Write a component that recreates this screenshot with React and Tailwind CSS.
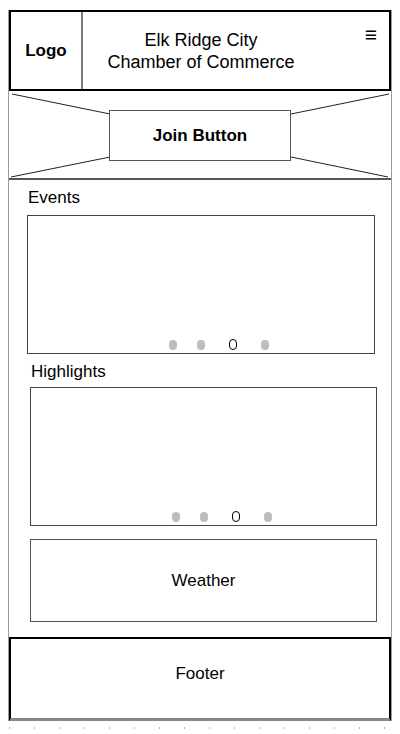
import React from 'react';

const Dots = ({ offset }) => (
  <div className={`flex items-center gap-[20px] pb-[3px] ${offset}`}>
    <span className="w-[8px] h-[10px] rounded-full bg-[#bdbdbd]" />
    <span className="w-[8px] h-[10px] rounded-full bg-[#bdbdbd]" />
    <span className="ml-[4px] w-[8px] h-[11px] rounded-full border border-black" />
    <span className="ml-[4px] w-[8px] h-[10px] rounded-full bg-[#bdbdbd]" />
  </div>
);

const App = () => {
  const ticks = Array.from({ length: 16 });

  return (
    <div className="w-[400px] h-[734px] bg-white text-black font-['Liberation_Sans',Arial,sans-serif] pt-[10px]">
      <div className="mx-[8px] border-l border-r border-[#9a9a9a]">
        {/* header */}
        <div className="h-[81px] flex border-2 border-black">
          <div className="w-[72px] flex items-center justify-center border-r-2 border-[#7a7a7a]">
            <span className="text-[17px] font-bold">Logo</span>
          </div>
          <div className="flex-1 relative flex items-center justify-center">
            <div className="text-center text-[18px] leading-[22px] pr-[70px]">
              <div>Elk Ridge City</div>
              <div>Chamber of Commerce</div>
            </div>
            <span className="absolute right-[12px] top-[12px] text-[21px] leading-none">≡</span>
          </div>
        </div>

        {/* hero */}
        <div className="relative h-[89px] flex items-center justify-center border-b-2 border-[#555]">
          <svg className="absolute inset-0" width="382" height="89" viewBox="0 0 382 89">
            <line x1="3" y1="3" x2="101" y2="23" stroke="#222" strokeWidth="1" />
            <line x1="2" y1="86" x2="101" y2="66" stroke="#222" strokeWidth="1" />
            <line x1="380" y1="3" x2="282" y2="23" stroke="#222" strokeWidth="1" />
            <line x1="379" y1="86" x2="282" y2="66" stroke="#222" strokeWidth="1" />
          </svg>
          <div className="relative w-[182px] h-[51px] mt-[2px] bg-white border border-[#555] flex items-center justify-center">
            <span className="text-[17px] font-bold">Join Button</span>
          </div>
        </div>

        {/* content */}
        <div className="pt-[7px] pb-[15px]">
          <div className="pl-[19px] text-[17px] leading-[22px]">Events</div>
          <div className="ml-[18px] mr-[16px] mt-[6px] h-[139px] border border-[#444] flex flex-col justify-end">
            <Dots offset="pl-[141px]" />
          </div>

          <div className="pl-[22px] mt-[7px] text-[17px] leading-[22px]">Highlights</div>
          <div className="ml-[21px] mr-[14px] mt-[4px] h-[139px] border border-[#444] flex flex-col justify-end">
            <Dots offset="pl-[141px]" />
          </div>

          <div className="ml-[21px] mr-[14px] mt-[13px] h-[83px] border border-[#555] flex items-center justify-center">
            <span className="text-[17px]">Weather</span>
          </div>
        </div>

        {/* footer */}
        <div className="h-[84px] border-2 border-black border-b-[3px] border-b-[#888] flex items-center justify-center">
          <span className="text-[17px] -mt-[10px]">Footer</span>
        </div>
      </div>

      <div className="mt-[6px] pl-[9px] flex gap-[24px]">
        {ticks.map((_, i) => (
          <span key={i} className="w-px h-[2px] bg-[#b5b5b5]" />
        ))}
      </div>
    </div>
  );
};

export default App;
